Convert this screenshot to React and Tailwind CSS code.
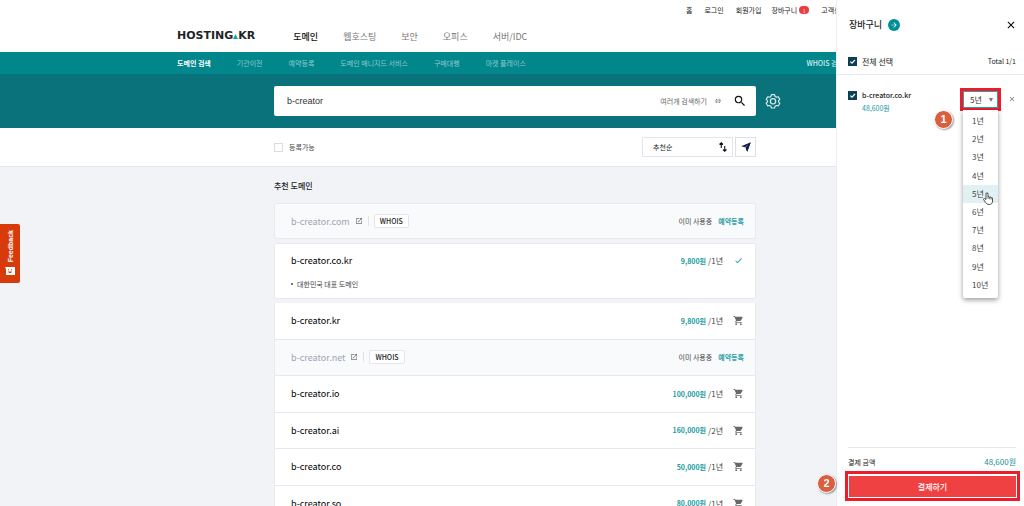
import { MdSearch, MdShoppingCart, MdOpenInNew, MdCheck, MdClose, MdArrowForward } from "react-icons/md";

const products = [
  { name: "b-creator.kr", price: "9,800원", term: "/1년" },
  { name: "b-creator.net", taken: true },
  { name: "b-creator.io", price: "100,000원", term: "/1년" },
  { name: "b-creator.ai", price: "160,000원", term: "/2년" },
  { name: "b-creator.co", price: "50,000원", term: "/1년" },
  { name: "b-creator.so", price: "80,000원", term: "/1년" },
];

const years = ["1년", "2년", "3년", "4년", "5년", "6년", "7년", "8년", "9년", "10년"];

function Logo() {
  return (
    <a
      href="#home"
      aria-label="HOSTING.KR"
      className="flex items-baseline font-['DejaVu_Sans'] text-[11px] leading-3 font-bold text-[#1d2429]"
    >
      HOSTING
      <svg viewBox="0 0 6 6" className="h-[5px] w-[5px]" aria-hidden="true">
        <path d="M3 0 6 6H0Z" fill="#18a3a8" />
      </svg>
      KR
    </a>
  );
}

function GearIcon() {
  return (
    <svg viewBox="0 0 24 24" className="size-4" fill="none" stroke="#d5e9ea" strokeWidth="1.8" strokeLinejoin="round" aria-hidden="true">
      <path d="M9.6 2.5h4.8l.8 2.7 1.9 1.1 2.8-.7 2.3 4-2 2.1v1.6l2 2.1-2.3 4-2.8-.7-1.9 1.1-.8 2.7H9.6l-.8-2.7-1.9-1.1-2.8.7-2.3-4 2-2.1v-1.6l-2-2.1 2.3-4 2.8.7 1.9-1.1Z" />
      <circle cx="12" cy="12.5" r="4" />
    </svg>
  );
}

function SortIcon() {
  return (
    <svg viewBox="0 0 16 20" className="h-[10px] w-2" fill="none" stroke="#111" strokeWidth="2.2" aria-hidden="true">
      <path d="M4.5 12V2M1 5 4.500 1.600 8 5M11.500 8v10M8 15l3.500 3.400L15 15" />
    </svg>
  );
}

function SwapIcon() {
  return (
    <svg viewBox="0 0 14 12" className="h-[6px] w-[6px]" fill="none" stroke="#666" strokeWidth="1.6" aria-hidden="true">
      <path d="M4.500 11V1.500L1 5M9.500 1v9.500L13 7M0 8h4.500M9.500 4H14" />
    </svg>
  );
}

function SendIcon() {
  return (
    <svg viewBox="0 0 20 20" className="size-[10px]" aria-hidden="true">
      <path d="M19.500.5 12.500 19.500 9.600 12.400 15 5.300 7.600 10.400.5 8.300Z" fill="#141d45" />
      <path d="M19.500.5 8.800 11.200l3.700 8.300Z" fill="#141d45" />
    </svg>
  );
}

function HandCursor() {
  return (
    <svg viewBox="0 0 20 26" className="h-[13px] w-[10px]" aria-hidden="true">
      <path
        d="M6 15V3.500a2 2 0 0 1 4 0V10a1.800 1.800 0 0 1 3.300.8 1.700 1.700 0 0 1 3 .9 1.500 1.500 0 0 1 2.700 1V18c0 4-2 7-6.500 7C8 25 6.500 23 5 20.500L1.300 15.500c-1-1.800 1-3.200 2.400-2Z"
        fill="#fff"
        stroke="#222"
        strokeWidth="1.6"
        strokeLinejoin="round"
      />
      <path d="M10 10v4M13.300 11v3.500M16.300 12v3" stroke="#222" strokeWidth="1.300" />
    </svg>
  );
}

function Step({ children }) {
  return (
    <span className="flex size-[19px] items-center justify-center rounded-full border border-white bg-[#d95f3f] font-['Liberation_Sans'] text-[11px] font-bold text-white shadow-[1px_1px_2px_rgba(0,0,0,0.4)]">
      {children}
    </span>
  );
}

function Tick({ id }) {
  return (
    <span className="grid size-[9px] shrink-0">
      <input
        id={id}
        type="checkbox"
        defaultChecked
        className="col-start-1 row-start-1 size-[9px] appearance-none bg-[#0d3f57]"
      />
      <svg viewBox="0 0 9 9" className="pointer-events-none col-start-1 row-start-1 size-[9px]" aria-hidden="true">
        <path d="M2.300 4.600 4 6.200 6.900 3" fill="none" stroke="#fff" strokeWidth="1.200" />
      </svg>
    </span>
  );
}

function TakenRow({ name }) {
  return (
    <>
      <span className="text-[9px] text-[#a0a4b0]">{name}</span>
      <a href="#open" aria-label={name} className="ml-[5px]">
        <MdOpenInNew className="size-2 text-[#777]" />
      </a>
      <span className="mx-[5px] h-[10px] w-px bg-[#e1e3e9]" />
      <button className="flex h-[14px] items-center rounded-xs border border-[#e3e5ea] bg-white px-[5px] text-[7px] font-medium text-[#222]">
        WHOIS
      </button>
      <span className="ml-auto text-[7px] text-[#444]">이미 사용중</span>
      <a href="#reserve" className="ml-[6px] text-[7px] font-bold text-[#2a9fa6]">
        예약등록
      </a>
    </>
  );
}

function PricedRow({ name, price, term, added }) {
  return (
    <>
      <span className="text-[9px] text-black">{name}</span>
      <span className="ml-auto pt-px text-[7px] font-bold text-[#1a9ba1]">{price}</span>
      <span className="ml-[2px] pt-px text-[8px] text-[#444]">{term}</span>
      <button aria-label={name} className="ml-[10px] flex w-[11px] justify-center">
        {added ? <MdCheck className="size-[9px] text-[#1a9ba1]" /> : <MdShoppingCart className="size-[11px] text-[#686868]" />}
      </button>
    </>
  );
}

function Header() {
  return (
    <header className="bg-white">
      <div className="mx-auto max-w-[670px]">
        <nav className="flex h-5 items-center justify-end gap-3 text-[7px] text-[#222]">
          <a href="#home">홈</a>
          <a href="#login">로그인</a>
          <a href="#join">회원가입</a>
          <a href="#cart" className="-ml-[2px] flex items-center gap-[2px]">
            장바구니
            <span className="flex h-2 w-[10px] items-center justify-center rounded-full bg-[#ef3b3b] text-[5px] text-white">1</span>
          </a>
          <a href="#help">고객센터</a>
        </nav>
        <div className="flex h-8 items-center">
          <Logo />
          <nav className="ml-[38px] flex gap-[25px] text-[9px] text-[#777]">
            <a href="#domain" className="font-medium text-[#111]">도메인</a>
            <a href="#web">웹호스팅</a>
            <a href="#security">보안</a>
            <a href="#office">오피스</a>
            <a href="#server">서버/IDC</a>
          </nav>
        </div>
      </div>
    </header>
  );
}

function Cart() {
  return (
    <aside className="fixed inset-y-0 right-0 flex w-[188px] flex-col border-l border-[#eceef2] bg-white text-[#222]">
      <div className="flex h-[49px] items-center pr-[7px] pl-3">
        <h2 className="text-[9px] font-medium">장바구니</h2>
        <a href="#cart" aria-label="장바구니" className="ml-[6px] flex size-3 items-center justify-center rounded-full bg-[#008f96]">
          <MdArrowForward className="size-2 text-white" />
        </a>
        <button aria-label="닫기" className="ml-auto">
          <MdClose className="size-3 text-black" />
        </button>
      </div>
      <div className="flex h-[26px] items-center border-b border-[#e6e8ec] pr-2 pl-[11px] text-[8px]">
        <Tick id="all" />
        <label htmlFor="all" className="ml-[5px]">전체 선택</label>
        <span className="ml-auto text-[7px]">Total 1/1</span>
      </div>
      <div className="flex items-start pt-[13px] pr-2 pl-[11px]">
        <span className="pt-[3px]"><Tick id="item" /></span>
        <label htmlFor="item" className="ml-[5px] flex flex-col pt-px text-[7px] leading-[13px] font-medium">
          b-creator.co.kr
          <span className="font-normal text-[#1a9ba1]">48,600원</span>
        </label>
        <div className="relative ml-auto border-[3px] border-[#ed1c2b]">
          <div className="grid border border-[#2fa0a5] bg-white">
            <select
              aria-label="기간"
              defaultValue="5년"
              className="col-start-1 row-start-1 h-[15px] w-[33px] appearance-none pl-[6px] text-[8px] leading-[15px] text-[#333] outline-none"
            >
              {years.map((y) => (
                <option key={y}>{y}</option>
              ))}
            </select>
            <svg viewBox="0 0 4 4" className="pointer-events-none col-start-1 row-start-1 mr-1 size-1 self-center justify-self-end" aria-hidden="true">
              <path d="M0 0h4L2 4Z" fill="#777" />
            </svg>
          </div>
          <ul
            role="listbox"
            aria-label="기간"
            className="absolute top-[19px] left-0 grid h-[188px] w-[35px] auto-rows-fr rounded-b-xs bg-white pt-[2px] pb-1 text-[8px] text-[#444] shadow-[0_2px_5px_rgba(0,0,0,0.4)]"
          >
            {years.map((y) => (
              <li
                key={y}
                role="option"
                aria-selected={y === "5년"}
                className="flex items-center pl-[9px] aria-selected:bg-[#dff1f3]"
              >
                {y}
              </li>
            ))}
          </ul>
          <div className="absolute top-[101px] left-[20px]"><HandCursor /></div>
          <div className="absolute top-[19px] -left-[29px]"><Step>1</Step></div>
        </div>
        <button aria-label="삭제" className="mt-[7px] ml-[7px]">
          <MdClose className="size-2 text-[#777]" />
        </button>
      </div>
      <div className="mt-auto pb-[5px]">
        <div className="mr-2 ml-[11px] flex h-6 items-center justify-between border-t border-[#e6e8ec] pt-[6px]">
          <span className="text-[7px]">결제 금액</span>
          <span className="text-[8px] text-[#1a8f95]">48,600원</span>
        </div>
        <div className="relative mr-1 ml-2 border-[3px] border-[#ed1c2b] p-px">
          <button className="h-[21px] w-full bg-[#f04142] text-[8px] font-medium text-white">결제하기</button>
          <div className="absolute top-0 -left-[31px]"><Step>2</Step></div>
        </div>
      </div>
    </aside>
  );
}

export default function App() {
  return (
    <div className="h-screen overflow-hidden bg-[#f2f3f7] font-['Noto_Sans_CJK_KR',sans-serif] leading-none">
      <Header />
      <nav className="bg-[#00868b]">
        <div className="mx-auto flex h-[22px] max-w-[670px] items-center gap-[26px] text-[7px] text-[#8fcccf]">
          <a href="#search" className="font-bold text-white">도메인 검색</a>
          <a href="#transfer">기관이전</a>
          <a href="#reserve">예약등록</a>
          <a href="#managed">도메인 매니지드 서비스</a>
          <a href="#agency">구매대행</a>
          <a href="#market">마켓 플레이스</a>
          <a href="#whois" className="mr-[3px] ml-auto font-medium text-[#d5ecee]">WHOIS 검색</a>
        </div>
      </nav>
      <div className="bg-[#09727a] py-3">
        <form className="mx-auto flex max-w-[670px] items-center pl-[97px]">
          <div className="flex h-[30px] w-full max-w-[482px] items-center rounded-xs bg-white pr-[9px] pl-[13px]">
            <input
              aria-label="도메인 검색"
              defaultValue="b-creator"
              className="min-w-0 flex-1 font-['Liberation_Sans'] text-[9px] text-[#333] outline-none"
            />
            <button type="button" className="flex items-center gap-2 text-[7px] text-[#666]">
              여러개 검색하기
              <SwapIcon />
            </button>
            <button type="button" aria-label="검색" className="ml-3">
              <MdSearch className="size-[14px] text-[#111]" />
            </button>
          </div>
          <button type="button" aria-label="설정" className="ml-[9px]">
            <GearIcon />
          </button>
        </form>
      </div>
      <div className="border-b border-[#e4e6eb] bg-white">
        <div className="mx-auto max-w-[670px] pl-[97px]">
          <div className="flex h-[38px] max-w-[482px] items-center">
            <input id="available" type="checkbox" className="size-[9px] appearance-none border border-[#d9dde3] bg-white" />
            <label htmlFor="available" className="ml-[6px] text-[7px] text-[#444]">등록가능</label>
            <div className="ml-auto grid">
              <select
                aria-label="정렬"
                className="col-start-1 row-start-1 h-5 w-[91px] appearance-none border border-[#e3e5ea] bg-white pl-[10px] text-[7px] text-[#222] outline-none"
              >
                <option>추천순</option>
              </select>
              <span className="pointer-events-none col-start-1 row-start-1 mr-[6px] self-center justify-self-end">
                <SortIcon />
              </span>
            </div>
            <button aria-label="보내기" className="ml-[2px] flex h-5 w-[21px] items-center justify-center border border-[#dddfe5]">
              <SendIcon />
            </button>
          </div>
        </div>
      </div>
      <main className="mx-auto max-w-[670px] pl-[97px]">
        <div className="flex max-w-[482px] flex-col gap-1">
          <h1 className="flex h-8 items-center pt-[5px] text-[8px] font-medium text-[#222]">추천 도메인</h1>
          <section className="flex h-9 items-center rounded-xs border border-[#e8eaee] bg-[#f9fafc] pr-[11px] pl-4">
            <TakenRow name="b-creator.com" />
          </section>
          <section className="h-14 rounded-xs border border-[#e8eaee] bg-white pr-[11px] pl-4">
            <div className="flex h-[33px] items-center">
              <PricedRow name="b-creator.co.kr" price="9,800원" term="/1년" added />
            </div>
            <ul className="flex h-[14px] items-center text-[7px] text-[#444]">
              <li className="flex items-center gap-1 before:size-[2px] before:rounded-full before:bg-[#444]">대한민국 대표 도메인</li>
            </ul>
          </section>
          <ul className="grid h-[219px] auto-rows-fr border-x border-[#e8eaee]">
            {products.map((p) => (
              <li
                key={p.name}
                className={`flex items-center border-b border-[#e6e8ed] pr-[11px] pl-4 ${p.taken ? "bg-[#f9fafc]" : "bg-white"}`}
              >
                {p.taken ? <TakenRow name={p.name} /> : <PricedRow {...p} />}
              </li>
            ))}
          </ul>
        </div>
      </main>
      <button className="fixed top-[224px] left-0 flex h-[59px] w-5 flex-col items-center justify-between rounded-r-xs bg-[#d83b0b] pt-[6px] pb-2 text-white">
        <span className="rotate-180 font-['Liberation_Sans'] text-[7px] font-bold [writing-mode:vertical-rl]">Feedback</span>
        <svg viewBox="0 0 10 8" className="h-2 w-[10px] shrink-0" aria-hidden="true">
          <path d="M0 0h10v8H1V2Z" fill="#fff" />
          <path d="M3 2.200h1v1H3ZM6 2.200h1v1H6ZM3 4.500h4L6 6H4Z" fill="#d83b0b" />
        </svg>
      </button>
      <Cart />
    </div>
  );
}
